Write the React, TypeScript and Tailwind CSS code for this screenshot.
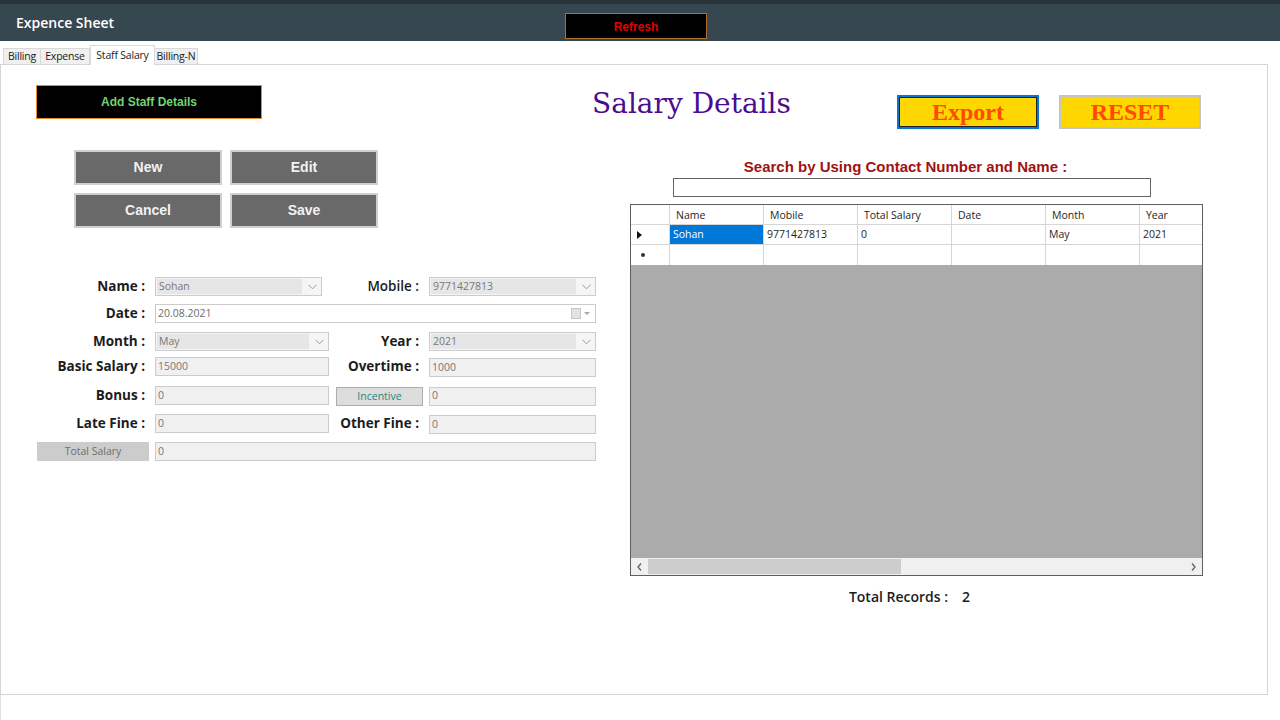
import React from 'react'

const Chevron = () => (
  <svg width="9" height="6" viewBox="0 0 9 6" fill="none">
    <polyline points="0.5,0.8 4.5,4.8 8.5,0.8" stroke="#9a9a9a" strokeWidth="1" />
  </svg>
)

function Combo({ w, value }: { w: string; value: string }) {
  return (
    <div className={`${w} h-[19px] flex border border-[#cccccc] bg-[#f5f5f5]`}>
      <div className="flex-1 m-[1px] bg-[#e6e6e6] px-[2px] flex items-center text-[10.5px] text-[#777777]">{value}</div>
      <div className="w-[18px] flex items-center justify-center">
        <Chevron />
      </div>
    </div>
  )
}

function TextBox({ w, value }: { w: string; value: string }) {
  return (
    <div className={`${w} h-[19px] border border-[#cccccc] bg-[#f0f0f0] px-[2px] flex items-center text-[10.5px] text-[#777777]`}>
      {value}
    </div>
  )
}

function Label({ w, text, semi }: { w: string; text: string; semi?: boolean }) {
  return (
    <div className={`${w} text-right text-[13.5px] leading-none text-[#1c1c1c] ${semi ? 'font-semibold' : 'font-bold'}`}>
      {text}
    </div>
  )
}

const cols = ['Name', 'Mobile', 'Total Salary', 'Date', 'Month', 'Year']
const row1 = ['Sohan', '9771427813', '0', '', 'May', '2021']

export default function App() {
  return (
    <div className="w-[1280px] h-[720px] overflow-hidden bg-white font-['Open_Sans',sans-serif]">
      {/* top bar */}
      <div className="h-[41px] bg-[#37474f] border-t-4 border-[#28343a] flex">
        <div className="ml-4 w-[549px] h-[37px] flex items-center text-white text-[14px] font-semibold">Expence Sheet</div>
        <button className="mt-[9px] w-[142px] h-[26px] pt-[1px] bg-black border border-[#b0702c] text-[#e10000] text-[12px] font-bold font-['Liberation_Sans',sans-serif]">
          Refresh
        </button>
      </div>

      {/* tabs */}
      <div className="h-[23px] flex items-end pl-[3px] text-[10.5px] tracking-[-0.2px] whitespace-nowrap text-[#1a1a1a]">
        <div className="w-[38px] h-[16px] bg-[#f0f0f0] border border-b-0 border-[#d9d9d9] flex items-center justify-center">Billing</div>
        <div className="w-[49px] h-[16px] bg-[#f0f0f0] border border-b-0 border-l-0 border-[#d9d9d9] flex items-center justify-center">Expense</div>
        <div className="w-[65px] h-[20px] bg-white border border-b-0 border-[#d9d9d9] flex items-center justify-center -mb-px relative z-10">Staff Salary</div>
        <div className="w-[43px] h-[16px] bg-[#f0f0f0] border border-b-0 border-l-0 border-[#d9d9d9] flex items-center justify-center">Billing-N</div>
      </div>

      {/* panel */}
      <div className="w-[1268px] h-[631px] border border-[#d5d5d5] bg-white">
        {/* header row */}
        <div className="flex items-start mt-[20px]">
          <button className="ml-[35px] w-[226px] h-[34px] bg-black border border-[#e8882a] text-[#72d472] text-[12px] font-bold font-['Liberation_Sans',sans-serif]">
            Add Staff Details
          </button>
          <div className="ml-[330px] w-[305px] h-[36px] leading-[38px] text-[28px] text-[#4b0d8f] font-['DejaVu_Serif',serif]">
            Salary Details
          </div>
          <button className="mt-[10px] w-[142px] h-[34px] leading-none bg-[#ffd700] border-2 border-[#0a74d4] outline outline-1 -outline-offset-[3px] outline-[#222] text-[#ff4a00] text-[24px] font-bold font-['Liberation_Serif',serif]">
            Export
          </button>
          <button className="mt-[10px] ml-[20px] w-[142px] h-[34px] leading-none bg-[#ffd700] border-2 border-[#c4c4c4] text-[#ff4a00] text-[24px] font-bold font-['Liberation_Serif',serif]">
            RESET
          </button>
        </div>

        {/* body */}
        <div className="flex mt-[21px]">
          {/* left column */}
          <div className="w-[610px] shrink-0">
            <div className="ml-[73px] grid grid-cols-[148px_148px] gap-x-[8px] gap-y-[8px] font-['Liberation_Sans',sans-serif]">
              {['New', 'Edit', 'Cancel', 'Save'].map((t) => (
                <button key={t} className="h-[35px] border-2 border-[#cfcfcf] bg-[#696969] text-[#f2f2f2] text-[14px] font-bold">
                  {t}
                </button>
              ))}
            </div>

            {/* form */}
            <div className="mt-[49px]">
              <div className="flex items-center h-[19px]">
                <Label w="w-[144px]" text="Name :" />
                <div className="ml-[10px] w-[175px]">
                  <Combo w="w-[167px]" value="Sohan" />
                </div>
                <Label w="w-[89px]" text="Mobile :" semi />
                <div className="ml-[10px]">
                  <Combo w="w-[167px]" value="9771427813" />
                </div>
              </div>

              <div className="flex items-center h-[19px] mt-[8px]">
                <Label w="w-[144px]" text="Date :" />
                <div className="ml-[10px] w-[441px] h-[19px] border border-[#cccccc] bg-white flex items-center px-[2px] text-[10.5px] text-[#6d6d6d]">
                  <span className="flex-1">20.08.2021</span>
                  <span className="w-[10px] h-[11px] bg-[#e4e4e4] border border-[#c6c6c6]" />
                  <svg width="8" height="5" viewBox="0 0 8 5" className="ml-[2px] mr-[2px]">
                    <polygon points="1,1 7,1 4,4" fill="#a8a8a8" />
                  </svg>
                </div>
              </div>

              <div className="flex items-center h-[19px] mt-[9px]">
                <Label w="w-[144px]" text="Month :" />
                <div className="ml-[10px] w-[175px]">
                  <Combo w="w-[174px]" value="May" />
                </div>
                <Label w="w-[89px]" text="Year :" />
                <div className="ml-[10px]">
                  <Combo w="w-[167px]" value="2021" />
                </div>
              </div>

              <div className="flex items-center h-[19px] mt-[6px]">
                <Label w="w-[144px]" text="Basic Salary :" />
                <div className="ml-[10px] w-[175px]">
                  <TextBox w="w-[174px]" value="15000" />
                </div>
                <Label w="w-[89px]" text="Overtime :" />
                <div className="ml-[10px] mt-[2px]">
                  <TextBox w="w-[167px]" value="1000" />
                </div>
              </div>

              <div className="flex items-center h-[19px] mt-[10px]">
                <Label w="w-[144px]" text="Bonus :" />
                <div className="ml-[10px] w-[175px]">
                  <TextBox w="w-[174px]" value="0" />
                </div>
                <button className="ml-[6px] mt-[2px] w-[87px] h-[19px] bg-[#dddddd] border border-[#adadad] text-[#118c8c] text-[10.5px]">
                  Incentive
                </button>
                <div className="ml-[6px] mt-[1px]">
                  <TextBox w="w-[167px]" value="0" />
                </div>
              </div>

              <div className="flex items-center h-[19px] mt-[9px]">
                <Label w="w-[144px]" text="Late Fine :" />
                <div className="ml-[10px] w-[175px]">
                  <TextBox w="w-[174px]" value="0" />
                </div>
                <Label w="w-[89px]" text="Other Fine :" />
                <div className="ml-[10px] mt-[2px]">
                  <TextBox w="w-[167px]" value="0" />
                </div>
              </div>

              <div className="flex items-center h-[19px] mt-[9px]">
                <button className="ml-[36px] w-[112px] h-[19px] bg-[#cccccc] text-[#6d6d6d] text-[10.5px]">Total Salary</button>
                <div className="ml-[6px]">
                  <TextBox w="w-[441px]" value="0" />
                </div>
              </div>
            </div>
          </div>

          {/* right column */}
          <div className="flex-1">
            <div className="ml-[19px] w-[573px] pr-[22px] mt-[8px] text-center leading-[18px] text-[15px] font-bold text-[#a11212] font-['Liberation_Sans',sans-serif]">
              Search by Using Contact Number and Name :
            </div>
            <div className="ml-[62px] mt-[2px] w-[478px] h-[19px] border border-[#646464] bg-white" />

            {/* grid */}
            <div className="ml-[19px] mt-[7px] w-[573px] h-[372px] border border-[#5e5e5e] bg-[#ababab] flex flex-col overflow-hidden text-[10.5px] text-[#1e1e1e]">
              <div className="flex h-[20px] bg-white border-b border-[#d6d6d6]">
                <div className="w-[39px] shrink-0 border-r border-[#d6d6d6]" />
                {cols.map((c) => (
                  <div key={c} className="w-[94px] shrink-0 border-r border-[#d6d6d6] px-[6px] pt-[2px] flex items-center">
                    {c}
                  </div>
                ))}
              </div>
              <div className="flex h-[20px] bg-white border-b border-[#d6d6d6]">
                <div className="w-[39px] shrink-0 border-r border-[#d6d6d6] flex items-center pl-[6px]">
                  <svg width="5" height="8" viewBox="0 0 5 8">
                    <polygon points="0,0 5,4 0,8" fill="#111" />
                  </svg>
                </div>
                {row1.map((c, i) => (
                  <div
                    key={i}
                    className={
                      i === 0
                        ? 'w-[94px] shrink-0 border-r border-[#d6d6d6] px-[3px] pt-[1px] flex items-center bg-[#0078d7] text-white'
                        : 'w-[94px] shrink-0 border-r border-[#d6d6d6] px-[3px] pt-[1px] flex items-center'
                    }
                  >
                    {c}
                  </div>
                ))}
              </div>
              <div className="flex h-[20px] bg-white">
                <div className="w-[39px] shrink-0 border-r border-[#d6d6d6] flex items-center pl-[10px]">
                  <span className="w-[4px] h-[4px] rounded-full bg-[#333]" />
                </div>
                {cols.map((c) => (
                  <div key={c} className="w-[94px] shrink-0 border-r border-[#d6d6d6]" />
                ))}
              </div>
              <div className="flex-1" />
              <div className="h-[17px] bg-[#f0f0f0] flex items-center">
                <div className="w-[17px] flex items-center justify-center">
                  <svg width="5" height="8" viewBox="0 0 5 8">
                    <polyline points="4,0.5 1,4 4,7.5" fill="none" stroke="#606060" strokeWidth="1.3" />
                  </svg>
                </div>
                <div className="w-[253px] h-[15px] bg-[#cdcdcd]" />
                <div className="flex-1" />
                <div className="w-[17px] flex items-center justify-center">
                  <svg width="5" height="8" viewBox="0 0 5 8">
                    <polyline points="1,0.5 4,4 1,7.5" fill="none" stroke="#606060" strokeWidth="1.3" />
                  </svg>
                </div>
              </div>
            </div>

            <div className="ml-[19px] w-[573px] pr-[14px] mt-[10px] h-[20px] flex items-center justify-center gap-[14px] text-[14px] font-semibold text-[#1c1c1c]">
              <span>Total Records :</span>
              <span>2</span>
            </div>
          </div>
        </div>
      </div>

      <div className="h-[25px] border-l border-[#e0e0e0]" />
    </div>
  )
}
